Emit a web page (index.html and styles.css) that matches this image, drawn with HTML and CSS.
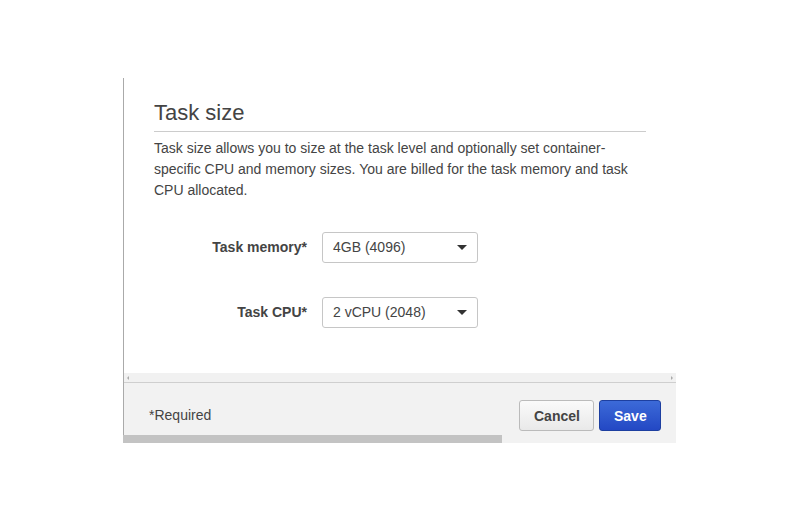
FILE: index.html
```html
<!doctype html>
<html lang="en">

<head>
  <meta charset="UTF-8">
  <title>Task size</title>
  <link rel="stylesheet" href="styles.css">
</head>

<body>
  <div class="panel">
    <div class="frame">
      <section class="content">
        <h2>Task size</h2>
        <p class="help">Task size allows you to size at the task level and optionally set container-specific CPU and memory sizes. You are billed for the task memory and task CPU allocated.</p>
        <div class="field">
          <label>Task memory*</label>
          <div class="select"><span>4GB (4096)</span><i class="caret"></i></div>
        </div>
        <div class="field">
          <label>Task CPU*</label>
          <div class="select"><span>2 vCPU (2048)</span><i class="caret"></i></div>
        </div>
      </section>
      <div class="hscroll">
        <span class="arrow left"></span>
        <span class="arrow right"></span>
      </div>
      <footer class="actions">
        <span class="required">*Required</span>
        <div class="buttons">
          <button class="btn cancel">Cancel</button>
          <button class="btn save">Save</button>
        </div>
      </footer>
    </div>
    <div class="pagescroll"><div class="thumb"></div></div>
  </div>
</body>

</html>
```

FILE: styles.css
```css
body {
  margin: 0;
  background: #fff;
  font: 400 14px/1.5 "Liberation Sans", Arial, sans-serif;
  color: #444;
}

.panel {
  width: 553px;
  margin: 78px 0 0 123px;
}

.frame {
  border-left: 1px solid #aaa;
}

.content {
  height: 295px;
  padding: 0 30px;
  box-sizing: border-box;
  overflow: hidden;
}

h2 {
  margin: 22px 0 0 0;
  padding-bottom: 5px;
  width: 492px;
  font: 400 22px/1.2 "Liberation Sans", Arial, sans-serif;
  color: #444;
  border-bottom: 1px solid #ccc;
}

.help {
  margin: 6px 0 0 0;
  width: 480px;
  line-height: 21px;
}

.field {
  display: flex;
  align-items: center;
  margin-top: 31px;
}

.field + .field {
  margin-top: 34px;
}

.field label {
  width: 153px;
  text-align: right;
  font-weight: 700;
  padding-right: 15px;
}

.select {
  display: flex;
  align-items: center;
  justify-content: space-between;
  width: 156px;
  height: 31px;
  box-sizing: border-box;
  padding: 0 10px;
  border: 1px solid #c6c6c6;
  border-radius: 3px;
  background: #fff;
}

.caret {
  width: 0;
  height: 0;
  border-left: 5px solid transparent;
  border-right: 5px solid transparent;
  border-top: 5px solid #333;
}

.hscroll {
  display: flex;
  justify-content: space-between;
  align-items: center;
  height: 9px;
  padding: 0 3px;
  background: #f1f1f1;
  border-bottom: 1px solid #cfcfcf;
}

.arrow {
  width: 0;
  height: 0;
  border-top: 2px solid transparent;
  border-bottom: 2px solid transparent;
}

.arrow.left {
  border-right: 2px solid #aaa;
}

.arrow.right {
  border-left: 2px solid #aaa;
}

.actions {
  display: flex;
  justify-content: space-between;
  align-items: center;
  height: 52px;
  padding: 0 15px 0 25px;
  background: #f2f2f2;
}

.required {
  margin-top: 13px;
}

.buttons {
  display: flex;
  gap: 5px;
  margin-top: 13px;
}

.btn {
  height: 31px;
  padding: 0 14px;
  font: 700 14px "Liberation Sans", Arial, sans-serif;
  border-radius: 3px;
}

.cancel {
  width: 75px;
  color: #444;
  border: 1px solid #bbb;
  background: linear-gradient(#fafafa, #e9e9e9);
}

.save {
  width: 62px;
  color: #fff;
  border: 1px solid #1d3fa0;
  background: linear-gradient(#3c6ad8, #2348c4);
}

.pagescroll {
  height: 8px;
  background: #f2f2f2;
}

.thumb {
  width: 379px;
  height: 100%;
  background: #c3c3c3;
}
```
